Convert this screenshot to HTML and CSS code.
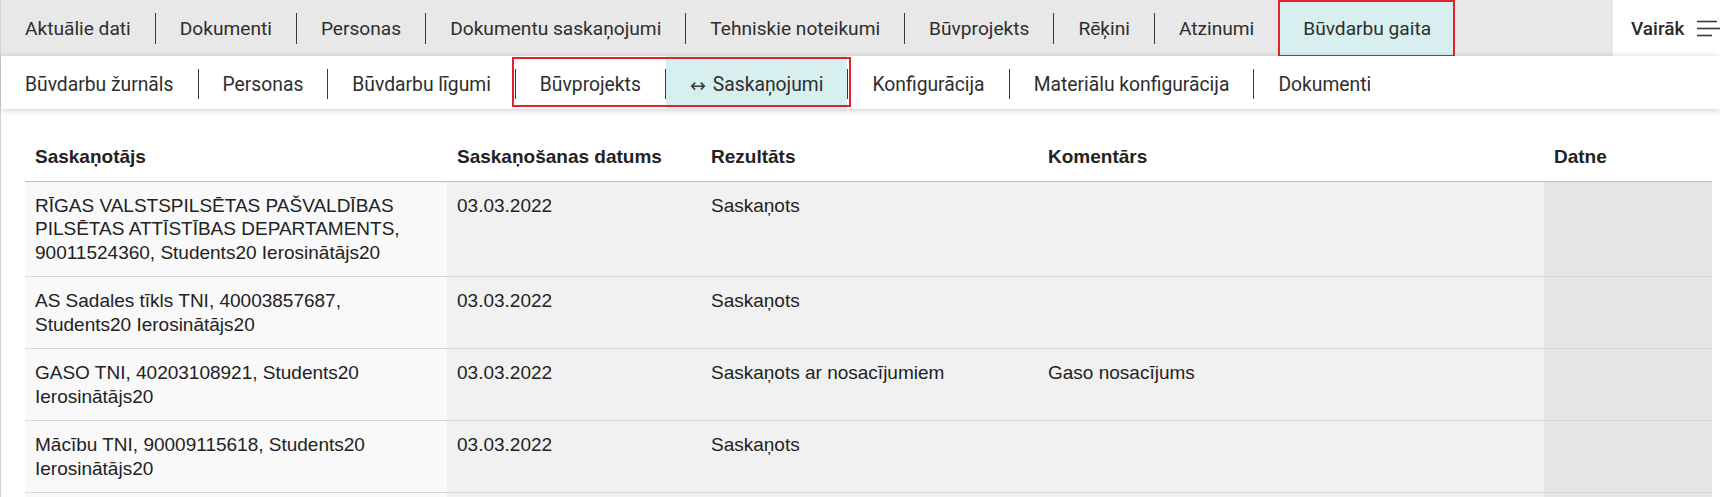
FILE: index.html
```html
<!DOCTYPE html>
<html lang="lv">
<head>
<meta charset="utf-8">
<title>Saskaņojumi</title>
<link rel="stylesheet" href="styles.css">
</head>
<body>
<div class="page">
  <header class="topbar">
    <nav class="tabs">
      <a class="tab">Aktuālie dati</a><span class="sep"></span>
      <a class="tab">Dokumenti</a><span class="sep"></span>
      <a class="tab">Personas</a><span class="sep"></span>
      <a class="tab">Dokumentu saskaņojumi</a><span class="sep"></span>
      <a class="tab">Tehniskie noteikumi</a><span class="sep"></span>
      <a class="tab">Būvprojekts</a><span class="sep"></span>
      <a class="tab">Rēķini</a><span class="sep"></span>
      <a class="tab">Atzinumi</a>
      <a class="tab tab-active">Būvdarbu gaita<span class="highlight"></span></a>
    </nav>
    <button class="more">Vairāk
      <svg class="more-icon" width="23" height="20" viewBox="0 0 23 20" aria-hidden="true">
        <line x1="0" y1="3.5" x2="20" y2="3.5"/>
        <line x1="0" y1="10.5" x2="23" y2="10.5"/>
        <line x1="0" y1="17.5" x2="15" y2="17.5"/>
      </svg>
    </button>
  </header>

  <nav class="subbar">
    <a class="sub">Būvdarbu žurnāls</a><span class="sep"></span>
    <a class="sub">Personas</a><span class="sep"></span>
    <a class="sub">Būvdarbu līgumi</a>
    <span class="group">
      <span class="sep"></span>
      <a class="sub">Būvprojekts</a><span class="sep"></span>
      <a class="sub sub-active"><span class="arrow">↔</span> Saskaņojumi</a><span class="sep"></span>
      <span class="highlight group-highlight"></span>
    </span>
    <a class="sub">Konfigurācija</a><span class="sep"></span>
    <a class="sub">Materiālu konfigurācija</a><span class="sep"></span>
    <a class="sub">Dokumenti</a>
  </nav>

  <main class="content">
    <table class="grid">
      <colgroup>
        <col class="c1"><col class="c2"><col class="c3"><col class="c4"><col class="c5">
      </colgroup>
      <thead>
        <tr>
          <th>Saskaņotājs</th>
          <th>Saskaņošanas datums</th>
          <th>Rezultāts</th>
          <th>Komentārs</th>
          <th>Datne</th>
        </tr>
      </thead>
      <tbody>
        <tr>
          <td class="col-a">RĪGAS VALSTSPILSĒTAS PAŠVALDĪBAS PILSĒTAS ATTĪSTĪBAS DEPARTAMENTS, 90011524360, Students20 Ierosinātājs20</td>
          <td class="col-b">03.03.2022</td>
          <td class="col-b">Saskaņots</td>
          <td class="col-b"></td>
          <td class="col-c"></td>
        </tr>
        <tr>
          <td class="col-a">AS Sadales tīkls TNI, 40003857687, Students20 Ierosinātājs20</td>
          <td class="col-b">03.03.2022</td>
          <td class="col-b">Saskaņots</td>
          <td class="col-b"></td>
          <td class="col-c"></td>
        </tr>
        <tr>
          <td class="col-a">GASO TNI, 40203108921, Students20 Ierosinātājs20</td>
          <td class="col-b">03.03.2022</td>
          <td class="col-b">Saskaņots ar nosacījumiem</td>
          <td class="col-b">Gaso nosacījums</td>
          <td class="col-c"></td>
        </tr>
        <tr>
          <td class="col-a">Mācību TNI, 90009115618, Students20 Ierosinātājs20</td>
          <td class="col-b">03.03.2022</td>
          <td class="col-b">Saskaņots</td>
          <td class="col-b"></td>
          <td class="col-c"></td>
        </tr>
        <tr class="row-empty">
          <td class="col-a"></td>
          <td class="col-b"></td>
          <td class="col-b"></td>
          <td class="col-b"></td>
          <td class="col-c"></td>
        </tr>
      </tbody>
    </table>
  </main>
</div>
</body>
</html>
```

FILE: styles.css
```css
html, body {
  margin: 0;
  padding: 0;
  overflow: hidden;
  background: #ffffff;
}

.page {
  width: 1720px;
  min-height: 497px;
  box-sizing: border-box;
  border-left: 1px solid #d4d4d4;
  font-family: Roboto, "Liberation Sans", sans-serif;
  color: #2b2b2b;
}

/* ---------- top bar ---------- */
.topbar {
  display: flex;
  height: 56px;
  overflow: hidden;
}

.tabs {
  flex: 1;
  min-width: 0;
  display: flex;
  align-items: center;
  background: #e8e8e8;
}

.tab {
  position: relative;
  display: flex;
  align-items: center;
  height: 100%;
  padding: 0 24px;
  font-size: 19.15px;
  color: #2e2e2e;
  white-space: nowrap;
  cursor: pointer;
}

.tab-active {
  background: #d7efef;
  padding: 0 24px 0 25px;
}

.tabs .sep {
  flex: none;
  width: 1px;
  height: 31px;
  background: #3a3a3a;
}

.more {
  flex: none;
  display: flex;
  align-items: center;
  width: 107px;
  height: 100%;
  padding: 0 0 0 18px;
  border: 0;
  background: #ffffff;
  font-family: Roboto, "Liberation Sans", sans-serif;
  font-size: 19px;
  font-weight: 500;
  color: #2b2b2b;
  overflow: visible;
  white-space: nowrap;
}

.more-icon {
  flex: none;
  margin-left: 13px;
  stroke: #3a3a3a;
  stroke-width: 1.6;
}

/* annotation boxes */
.highlight {
  position: absolute;
  left: 0;
  top: 0;
  right: 0;
  bottom: -1px;
  border: 2px solid #e3222c;
  pointer-events: none;
}

/* ---------- sub bar ---------- */
.subbar {
  position: relative;
  z-index: 1;
  display: flex;
  align-items: center;
  height: 53px;
  background: #ffffff;
  box-shadow: 0 1px 6px rgba(0, 0, 0, 0.22);
}

.sub {
  display: flex;
  align-items: center;
  box-sizing: border-box;
  height: 100%;
  padding: 4px 24px 0 24px;
  font-size: 19.3px;
  color: #2e2e2e;
  white-space: nowrap;
  cursor: pointer;
}

.subbar .sep {
  flex: none;
  width: 1px;
  height: 30px;
  margin-top: 3px;
  background: #3a3a3a;
}

.group {
  position: relative;
  display: flex;
  align-items: center;
  height: 100%;
}

.group-highlight {
  left: -3px;
  right: -3px;
  top: 1px;
  bottom: 2px;
}

.sub-active {
  background: #d7efef;
}

.arrow {
  font-family: "DejaVu Sans", sans-serif;
  font-size: 19px;
  margin-right: 7px;
  color: #3a3a3a;
}

/* ---------- table ---------- */
.content {
  padding: 24px 8px 0 24px;
}

.grid {
  width: 1687px;
  table-layout: fixed;
  border-collapse: collapse;
  font-family: "Liberation Sans", Arial, sans-serif;
  font-size: 19px;
  line-height: 23.5px;
  color: #222222;
}

.c1 { width: 422px; }
.c2 { width: 254px; }
.c3 { width: 337px; }
.c4 { width: 506px; }
.c5 { width: 168px; }

.grid th {
  text-align: left;
  font-weight: bold;
  padding: 12px 10px 12px 10px;
  border-bottom: 1px solid #bdbdbd;
  background: #ffffff;
}

.grid td {
  vertical-align: top;
  padding: 12px 10px 12px 10px;
  border-bottom: 1px solid #d6d6d6;
}

.col-a { background: #f9f9f9; }
.col-b { background: #f1f1f1; }
.col-c { background: #e6e6e6; }

.row-empty td {
  height: 48px;
}
```
